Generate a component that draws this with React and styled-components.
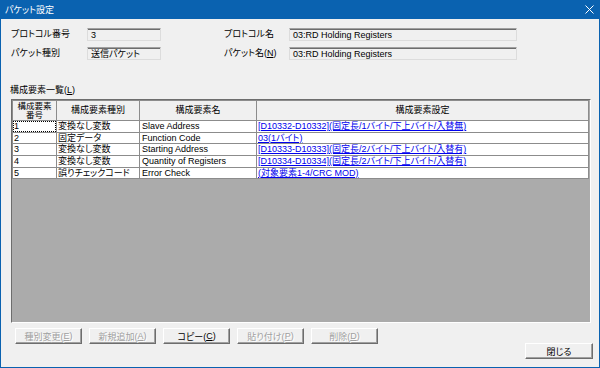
import React from 'react'
import styled, { createGlobalStyle } from 'styled-components'

const GlobalStyle = createGlobalStyle`
html, body {
  margin: 0;
  padding: 0;
  background: #f0f0f0;
}
body {
  font-family: "Liberation Sans", "Noto Sans CJK JP", sans-serif;
  font-size: 9px;
  font-feature-settings: "palt";
  color: #000;
}
`

const Window = styled.div`
width: 600px;
height: 368px;
box-sizing: border-box;
border: 1px solid #0a62b0;
border-top: none;
background: #f0f0f0;
display: flex;
flex-direction: column;
`
const TitleBar = styled.div`
height: 19px;
margin: 0 -1px;
background: #0a62b0;
display: flex;
align-items: center;
justify-content: space-between;
padding: 0 6px 0 5px;
color: #fff;
font-size: 9px;
`
const Body = styled.div`
flex: 1;
display: flex;
flex-direction: column;
padding: 9px 6px 0 9px;
`
const InfoRow = styled.div`
display: flex;
gap: 62px;
`
const InfoGroup = styled.div`
display: grid;
grid-template-columns: ${p => p.cols};
grid-auto-rows: 13px;
row-gap: 6px;
align-items: center;
`
const Label = styled.div`
padding-left: 1px;
line-height: 13px;
white-space: nowrap;
`
const Field = styled.div`
height: 13px;
box-sizing: border-box;
border: 1px solid #dcdcdc;
border-top: 1px solid #a0a0a0;
box-shadow: inset 0 1px #6d6d6d;
padding: 1px 0 0 3px;
line-height: 10px;
white-space: nowrap;
overflow: hidden;
`
const SectionLabel = styled.div`
margin: 25px 0 4px;
line-height: 10px;
`
const Frame = styled.div`
margin-left: 1px;
width: 580px;
height: 224px;
box-sizing: border-box;
border: 1px solid;
border-color: #6d6d6d #fff #fff #6d6d6d;
background: #ababab;
`
const Grid = styled.div`
display: grid;
width: 577px;
box-sizing: border-box;
grid-template-columns: 43px 82px 116px 331px;
grid-template-rows: 19px repeat(5, 10.67px);
gap: 1px;
padding: 1px;
background: #8c8c8c;
`
const HeadCell = styled.div`
background: #f0f0f0;
display: flex;
align-items: center;
justify-content: center;
text-align: center;
font-size: ${p => (p.small ? 8.5 : 9)}px;
line-height: 8.5px;
white-space: nowrap;
overflow: hidden;
`
const Cell = styled.div`
background: #fff;
padding-left: ${p => p.pad || 1}px;
line-height: 10.67px;
white-space: nowrap;
overflow: hidden;
outline: ${p => (p.focus ? '1px dotted #000' : 'none')};
outline-offset: -1px;
`
const Link = styled.span`
color: #0000ee;
text-decoration: underline;
`
const ButtonRow = styled.div`
display: flex;
gap: 7px;
margin: 5px 0 0 5px;
`
const Button = styled.div`
width: ${p => p.w || 67}px;
height: 16px;
box-sizing: border-box;
border: 1px solid;
border-color: #fff #6d6d6d #6d6d6d #fff;
box-shadow: inset -1px -1px #a0a0a0;
background: #f0f0f0;
display: flex;
align-items: center;
justify-content: center;
color: ${p => (p.disabled ? '#a0a0a0' : '#000')};
text-shadow: ${p => (p.disabled ? '1px 1px #fff' : 'none')};
white-space: nowrap;
`
const CloseButton = styled(Button)`
align-self: flex-end;
margin-top: -1px;
`

const rows = [
  ['1', '変換なし変数', 'Slave Address', '[D10332-D10332](固定長/1バイト/下上バイト/入替無)'],
  ['2', '固定データ', 'Function Code', '03(1バイト)'],
  ['3', '変換なし変数', 'Starting Address', '[D10333-D10333](固定長/2バイト/下上バイト/入替有)'],
  ['4', '変換なし変数', 'Quantity of Registers', '[D10334-D10334](固定長/2バイト/下上バイト/入替有)'],
  ['5', '誤りチェックコード', 'Error Check', '(対象要素1-4/CRC MOD)'],
]

function CloseIcon() {
  return (
    <svg width="9" height="9" viewBox="0 0 9 9">
      <path d="M0.5 0.5 L8.5 8.5 M8.5 0.5 L0.5 8.5" stroke="#fff" strokeWidth="1" />
    </svg>
  )
}

export default function App() {
  return (
    <Window>
      <GlobalStyle />
      <TitleBar>
        <span>パケット設定</span>
        <CloseIcon />
      </TitleBar>
      <Body>
        <InfoRow>
          <InfoGroup cols="77px 74px">
            <Label>プロトコル番号</Label>
            <Field>3</Field>
            <Label>パケット種別</Label>
            <Field>送信パケット</Field>
          </InfoGroup>
          <InfoGroup cols="66px 228px">
            <Label>プロトコル名</Label>
            <Field>03:RD Holding Registers</Field>
            <Label>パケット名(<u>N</u>)</Label>
            <Field>03:RD Holding Registers</Field>
          </InfoGroup>
        </InfoRow>
        <SectionLabel>構成要素一覧(<u>L</u>)</SectionLabel>
        <Frame>
          <Grid>
            <HeadCell small>構成要素<br />番号</HeadCell>
            <HeadCell>構成要素種別</HeadCell>
            <HeadCell>構成要素名</HeadCell>
            <HeadCell>構成要素設定</HeadCell>
            {rows.map((r, i) => (
              <React.Fragment key={r[0]}>
                <Cell focus={i === 0}>{r[0]}</Cell>
                <Cell>{r[1]}</Cell>
                <Cell pad={2}>{r[2]}</Cell>
                <Cell><Link>{r[3]}</Link></Cell>
              </React.Fragment>
            ))}
          </Grid>
        </Frame>
        <ButtonRow>
          <Button disabled>種別変更(<u>E</u>)</Button>
          <Button disabled>新規追加(<u>A</u>)</Button>
          <Button>コピー(<u>C</u>)</Button>
          <Button disabled>貼り付け(<u>P</u>)</Button>
          <Button disabled>削除(<u>D</u>)</Button>
        </ButtonRow>
        <CloseButton w={68}>閉じる</CloseButton>
      </Body>
    </Window>
  )
}
